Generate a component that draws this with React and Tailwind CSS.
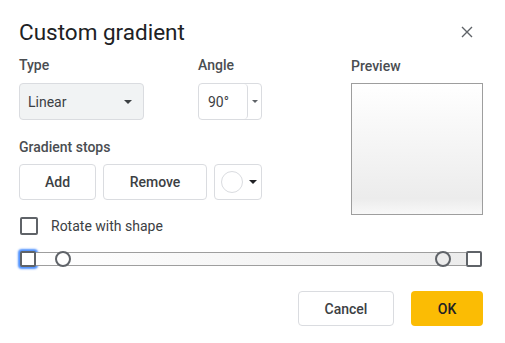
import React from "react";

function Caret({ className = "" }) {
  return (
    <svg width="8" height="4" viewBox="0 0 8 4" className={className}>
      <path d="M0 0h8L4 4z" fill="currentColor" />
    </svg>
  );
}

export default function App() {
  return (
    <div
      className="w-[505px] h-[343px] bg-white text-[#3c4043] flex flex-col overflow-hidden"
      style={{ fontFamily: "Roboto, 'Liberation Sans', sans-serif" }}
    >
      {/* Header */}
      <div className="flex items-center justify-between pl-[19px] pr-[32px] pt-[18px]">
        <h1 className="text-[22.5px] leading-[28px] text-[#202124] font-normal">Custom gradient</h1>
        <button className="text-[#5f6368]">
          <svg width="12" height="12" viewBox="0 0 12 12">
            <path d="M1 1l10 10M11 1L1 11" stroke="currentColor" strokeWidth="1.4" />
          </svg>
        </button>
      </div>

      {/* Body */}
      <div className="flex pl-[19px] pt-[9px]">
        <div className="w-[332px] flex flex-col">
          <div className="flex">
            <div className="w-[179px] flex flex-col gap-[8px]">
              <span className="text-sm leading-5 font-medium text-[#4a4d51]">Type</span>
              <div className="w-[125px] h-[37px] bg-[#f1f3f4] border border-[#dadce0] rounded flex items-center justify-between pl-[8px] pr-[11px]">
                <span className="text-sm">Linear</span>
                <Caret />
              </div>
            </div>
            <div className="flex flex-col gap-[8px]">
              <span className="text-sm leading-5 font-medium text-[#4a4d51]">Angle</span>
              <div className="w-[64px] h-[37px] border border-[#dadce0] rounded flex">
                <div className="w-[49px] h-full border-r border-[#dadce0] rounded flex items-center pl-[9px] text-sm text-[#3c4043]">
                  90°
                </div>
                <div className="flex-1 flex items-center justify-center text-[#5f6368]">
                  <svg width="6" height="3" viewBox="0 0 6 3">
                    <path d="M0 0h6L3 3z" fill="currentColor" />
                  </svg>
                </div>
              </div>
            </div>
          </div>

          <span className="text-sm leading-5 font-medium text-[#4a4d51] mt-[17px]">Gradient stops</span>
          <div className="flex gap-[7px] mt-[7px]">
            <button className="w-[77px] h-[36px] border border-[#dadce0] rounded text-sm font-medium">Add</button>
            <button className="w-[104px] h-[36px] border border-[#dadce0] rounded text-sm font-medium">Remove</button>
            <button className="w-[48px] h-[36px] border border-[#dadce0] rounded flex items-center pl-[6px] gap-[6px] text-[#202124]">
              <span className="w-[22px] h-[22px] rounded-full border border-[#dadce0] bg-white" />
              <Caret />
            </button>
          </div>

          <label className="flex items-center gap-[13px] mt-[16px] ml-px">
            <span className="w-[18px] h-[18px] border-2 border-[#5f6368] rounded-[2px]" />
            <span className="text-sm leading-5">Rotate with shape</span>
          </label>
        </div>

        <div className="flex flex-col gap-[7px] pt-px">
          <span className="text-sm leading-5 font-medium text-[#4a4d51]">Preview</span>
          <div className="w-[132px] h-[132px] border border-[#9e9e9e] bg-[linear-gradient(to_bottom,#ffffff,#ececec_88%,#f8f8f8)]" />
        </div>
      </div>

      {/* Slider */}
      <div className="flex items-center pl-[20px] pr-[23px] mt-[15px]">
        <span className="w-4 h-4 border-2 border-[#5f6368] rounded-[2px] bg-white shadow-[0_0_2px_2px_#4d90fe]" />
        <div className="relative flex-1 h-[14px] border-y border-[#9e9e9e] bg-[linear-gradient(to_right,#ffffff,#ececec)]">
          <span className="absolute left-[19px] top-1/2 -translate-y-1/2 w-4 h-4 rounded-full border-2 border-[#5f6368] bg-white" />
          <span className="absolute right-[15px] top-1/2 -translate-y-1/2 w-4 h-4 rounded-full border-2 border-[#5f6368] bg-[#ececec]" />
        </div>
        <span className="w-4 h-4 border-2 border-[#5f6368] rounded-[2px] bg-white" />
      </div>

      {/* Footer */}
      <div className="flex justify-end gap-[17px] pr-[22px] mt-[24px]">
        <button className="w-[96px] h-[35px] border border-[#dadce0] rounded text-sm font-medium text-[#3c4043]">Cancel</button>
        <button className="w-[72px] h-[35px] bg-[#fbbc04] rounded text-sm font-medium text-[#202124]">OK</button>
      </div>
    </div>
  );
}
